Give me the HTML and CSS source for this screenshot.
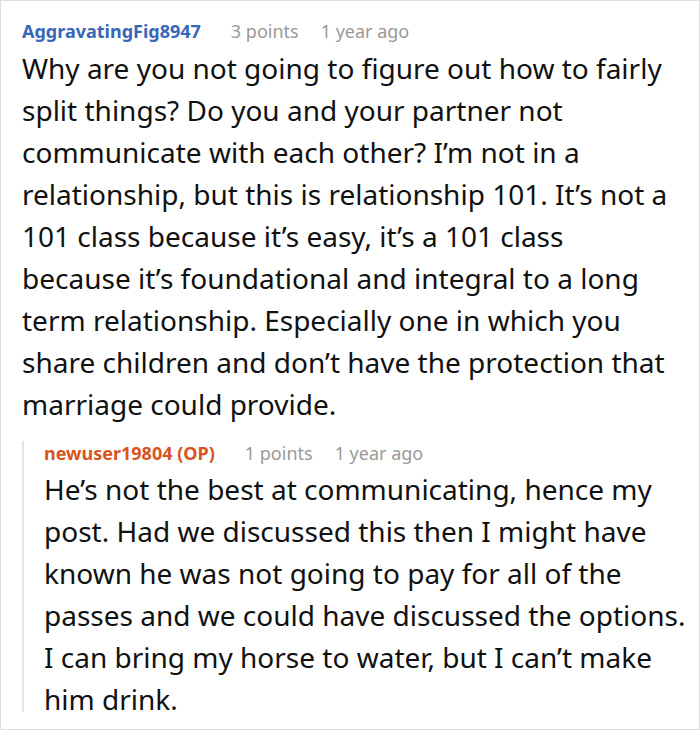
FILE: index.html
```html
<!DOCTYPE html>
<html>
<head>
<meta charset="utf-8">
<link rel="stylesheet" href="styles.css">
</head>
<body>
<div class="card">
  <div class="comment">
    <div class="meta">
      <span class="user">AggravatingFig8947</span>
      <span class="info">3 points</span>
      <span class="info">1 year ago</span>
    </div>
    <p class="text main-text">Why are you not going to figure out how to fairly split things? Do you and your partner not communicate with each other? I’m not in a relationship, but this is relationship 101. It’s not a 101 class because it’s easy, it’s a 101 class because it’s foundational and integral to a long term relationship. Especially one in which you share children and don’t have the protection that marriage could provide.</p>
    <div class="reply">
      <div class="meta">
        <span class="user op">newuser19804 (OP)</span>
        <span class="info">1 points</span>
        <span class="info">1 year ago</span>
      </div>
      <p class="text">He’s not the best at communicating, hence my post. Had we discussed this then I might have known he was not going to pay for all of the passes and we could have discussed the options. I can bring my horse to water, but I can’t make him drink.</p>
    </div>
  </div>
</div>
</body>
</html>
```
FILE: styles.css
```css
html, body {
  margin: 0;
  padding: 0;
  background: #fff;
}
body {
  font-family: "Noto Sans", "Open Sans", sans-serif;
  color: #111;
}
.card {
  width: 698px;
  height: 728px;
  border: 1px solid #ddd;
  overflow: hidden;
}
.comment {
  padding: 18px 11px 0 21px;
}
.meta {
  display: flex;
  align-items: baseline;
  font-size: 18px;
  line-height: 24px;
}
.user {
  font-weight: 700;
  color: #3866b8;
  margin-right: 30px;
}
.user.op {
  color: #d8541e;
}
.info {
  color: #999;
  margin-right: 22px;
}
.text {
  margin: 4px 0 0 0;
  font-size: 28px;
  line-height: 42px;
  color: #111;
}
.main-text {
  margin-right: 14px;
}
.reply {
  margin-top: 16px;
  border-left: 2px solid #e4e4e4;
  padding-left: 20px;
  height: 271px;
}
.reply .text {
  margin-top: 3px;
}
```
